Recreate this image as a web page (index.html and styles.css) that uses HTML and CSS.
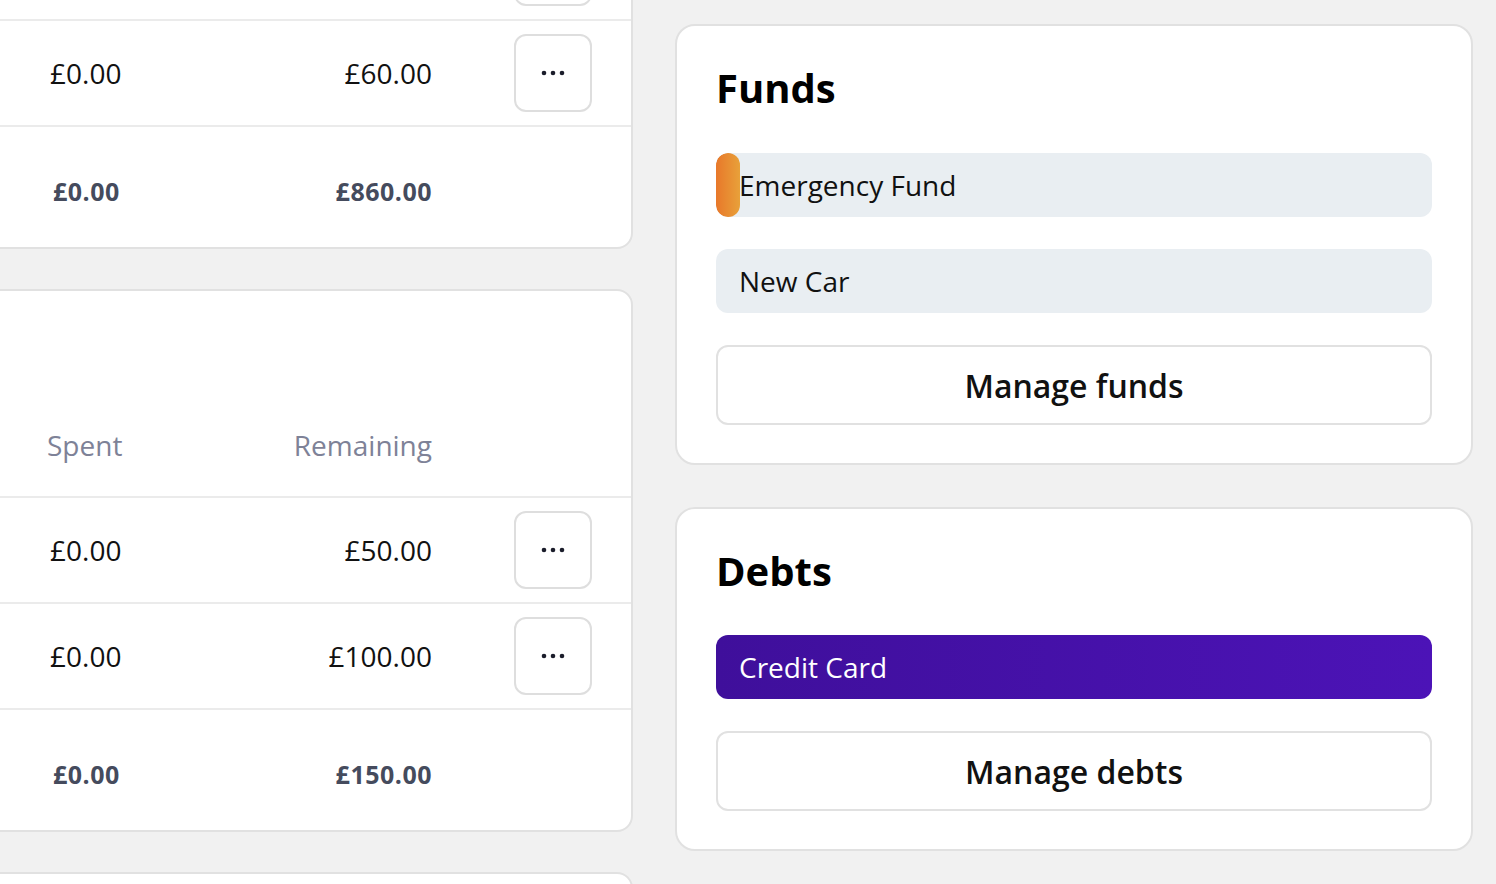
FILE: index.html
```html
<!DOCTYPE html>
<html lang="en">
<head>
<meta charset="utf-8">
<title>Budget</title>
<link rel="stylesheet" href="styles.css">
</head>
<body>
<div class="page">
  <div class="left-col">
    <section class="card budget-card first">
      <div class="row">
        <span class="amt"></span>
        <span class="amt right"></span>
        <button class="dots-btn" aria-label="More options"><svg width="24" height="6" viewBox="0 0 24 6"><circle cx="3" cy="3" r="2.3"/><circle cx="12" cy="3" r="2.3"/><circle cx="21" cy="3" r="2.3"/></svg></button>
      </div>
      <div class="row">
        <span class="amt">£0.00</span>
        <span class="amt right">£60.00</span>
        <button class="dots-btn" aria-label="More options"><svg width="24" height="6" viewBox="0 0 24 6"><circle cx="3" cy="3" r="2.3"/><circle cx="12" cy="3" r="2.3"/><circle cx="21" cy="3" r="2.3"/></svg></button>
      </div>
      <div class="row total">
        <span class="amt">£0.00</span>
        <span class="amt right">£860.00</span>
        <span></span>
      </div>
    </section>

    <section class="card budget-card">
      <div class="row head">
        <span>Spent</span>
        <span class="right">Remaining</span>
        <span></span>
      </div>
      <div class="row">
        <span class="amt">£0.00</span>
        <span class="amt right">£50.00</span>
        <button class="dots-btn" aria-label="More options"><svg width="24" height="6" viewBox="0 0 24 6"><circle cx="3" cy="3" r="2.3"/><circle cx="12" cy="3" r="2.3"/><circle cx="21" cy="3" r="2.3"/></svg></button>
      </div>
      <div class="row">
        <span class="amt">£0.00</span>
        <span class="amt right">£100.00</span>
        <button class="dots-btn" aria-label="More options"><svg width="24" height="6" viewBox="0 0 24 6"><circle cx="3" cy="3" r="2.3"/><circle cx="12" cy="3" r="2.3"/><circle cx="21" cy="3" r="2.3"/></svg></button>
      </div>
      <div class="row total">
        <span class="amt">£0.00</span>
        <span class="amt right">£150.00</span>
        <span></span>
      </div>
    </section>

    <section class="card budget-card stub"></section>
  </div>

  <div class="right-col">
    <section class="card side-card">
      <h2 class="side-title">Funds</h2>
      <div class="bar-list">
        <div class="bar fund"><span class="fill" style="width:24px"></span><span class="bar-label">Emergency Fund</span></div>
        <div class="bar fund"><span class="bar-label">New Car</span></div>
        <button class="manage-btn">Manage funds</button>
      </div>
    </section>

    <section class="card side-card debts">
      <h2 class="side-title">Debts</h2>
      <div class="bar-list">
        <div class="bar debt"><span class="bar-label">Credit Card</span></div>
        <button class="manage-btn">Manage debts</button>
      </div>
    </section>
  </div>
</div>
</body>
</html>
```

FILE: styles.css
```css
* { box-sizing: border-box; }

html, body {
  margin: 0;
  padding: 0;
  height: 884px;
  overflow: hidden;
}

body {
  background: #f1f1f1;
  font-family: "Open Sans", "Noto Sans", "Liberation Sans", sans-serif;
  color: #111;
}

.page {
  display: grid;
  grid-template-columns: 673px 798px;
  column-gap: 42px;
  margin-left: -40px;
  align-items: start;
}

.left-col {
  display: flex;
  flex-direction: column;
  gap: 40px;
  margin-top: -87px;
}

.right-col {
  display: flex;
  flex-direction: column;
  gap: 42px;
  padding-top: 24px;
}

.card {
  background: #fff;
  border: 2px solid #e1e1e1;
  border-radius: 20px;
}

.budget-card {
  border-radius: 16px;
}

.row {
  display: grid;
  grid-template-columns: 1fr 1fr 78px;
  column-gap: 82px;
  align-items: center;
  padding: 13px 39px 13px 85px;
  border-bottom: 2px solid #ebebeb;
  font-size: 28px;
  line-height: 42px;
}

.row:last-child { border-bottom: none; }

.row .right { text-align: right; }

.row .amt:first-child { padding-left: 3px; }

.row.head {
  padding-top: 133px;
  padding-bottom: 30px;
  color: #7e8297;
}

.row.total {
  padding-top: 45px;
  padding-bottom: 37px;
  font-size: 25px;
  line-height: 38px;
  font-weight: 700;
  letter-spacing: 0.5px;
  color: #454b5d;
}

.row.total .amt:first-child { padding-left: 6px; }

.dots-btn {
  width: 78px;
  height: 78px;
  padding: 0;
  background: #fff;
  border: 2px solid #dedede;
  border-radius: 12px;
  display: flex;
  align-items: center;
  justify-content: center;
}

.dots-btn svg { fill: #1b1d2b; display: block; }

.stub { height: 200px; }

.side-card {
  padding: 38px 39px 38px;
}

.side-title {
  margin: 0 0 41px;
  font-size: 40px;
  line-height: 48px;
  font-weight: 700;
  color: #000;
}

.debts .side-title { margin-bottom: 40px; }

.bar-list {
  display: flex;
  flex-direction: column;
  gap: 32px;
}

.bar {
  position: relative;
  height: 64px;
  border-radius: 12px;
  overflow: hidden;
  padding-left: 23px;
  font-size: 28px;
  line-height: 64px;
}

.bar.fund { background: #e9eef2; color: #111; }

.bar.debt {
  background: linear-gradient(90deg, #3f0f9b, #4c13b7);
  color: #fff;
}

.fill {
  position: absolute;
  left: 0;
  top: 0;
  bottom: 0;
  border-radius: 12px;
  background: linear-gradient(90deg, #e8782a, #e8a13a);
}

.bar-label { position: relative; }

.manage-btn {
  height: 80px;
  width: 100%;
  background: #fff;
  border: 2px solid #e1e1e1;
  border-radius: 12px;
  font-family: inherit;
  font-size: 32px;
  font-weight: 600;
  color: #111;
}
```
